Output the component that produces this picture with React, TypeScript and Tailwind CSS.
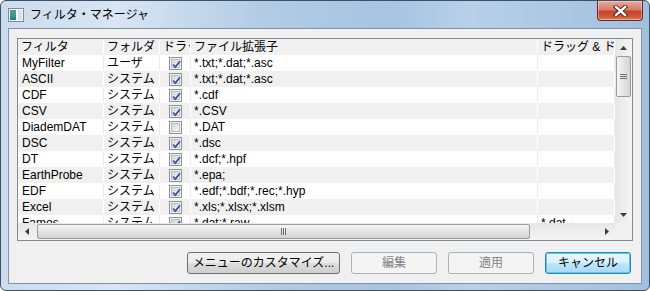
import type { ReactNode } from "react";

type Row = { name: string; folder: string; drag: boolean; ext: string; dd?: string };

const rows: Row[] = [
  { name: "MyFilter", folder: "ユーザ", drag: true, ext: "*.txt;*.dat;*.asc" },
  { name: "ASCII", folder: "システム", drag: true, ext: "*.txt;*.dat;*.asc" },
  { name: "CDF", folder: "システム", drag: true, ext: "*.cdf" },
  { name: "CSV", folder: "システム", drag: true, ext: "*.CSV" },
  { name: "DiademDAT", folder: "システム", drag: false, ext: "*.DAT" },
  { name: "DSC", folder: "システム", drag: true, ext: "*.dsc" },
  { name: "DT", folder: "システム", drag: true, ext: "*.dcf;*.hpf" },
  { name: "EarthProbe", folder: "システム", drag: true, ext: "*.epa;" },
  { name: "EDF", folder: "システム", drag: true, ext: "*.edf;*.bdf;*.rec;*.hyp" },
  { name: "Excel", folder: "システム", drag: true, ext: "*.xls;*.xlsx;*.xlsm" },
  { name: "Famos", folder: "システム", drag: true, ext: "*.dat;*.raw", dd: "*.dat" },
];

const cols = ["w-[86px]", "w-[56px]", "w-[31px]", "w-[347px]", "w-[77px]"];

function Check({ on }: { on: boolean }) {
  return (
    <span className="flex h-[13px] w-[13px] items-center justify-center border border-[#8e8f8f] bg-[#f4f4f4]">
      <span className="relative flex h-[9px] w-[9px] items-center justify-center border border-[#b9bec6] bg-[linear-gradient(135deg,#cfd3d9,#f7f7f7)]">
        {on && (
          <svg className="absolute -left-[1px] -top-[1px]" width="11" height="11" viewBox="0 0 11 11">
            <path d="M2 5.5 L4.3 8 L9 2.2" fill="none" stroke="#3a5697" strokeWidth="1.8" />
          </svg>
        )}
      </span>
    </span>
  );
}

function Cell({ w, sep, children, center = false }: { w: string; sep: string; children?: ReactNode; center?: boolean }) {
  return (
    <div
      className={`${w} flex h-full shrink-0 items-center overflow-hidden whitespace-nowrap border-r ${sep} ${
        center ? "justify-center" : "pl-[3px]"
      }`}
    >
      {children}
    </div>
  );
}

function Arrow({ dir }: { dir: "up" | "down" | "left" | "right" }) {
  const pts = {
    up: "0,4 7,4 3.5,0",
    down: "0,0 7,0 3.5,4",
    left: "4,0 4,7 0,3.5",
    right: "0,0 0,7 4,3.5",
  }[dir];
  const vert = dir === "up" || dir === "down";
  return (
    <svg width={vert ? 7 : 4} height={vert ? 4 : 7} viewBox={vert ? "0 0 7 4" : "0 0 4 7"}>
      <polygon points={pts} fill="#3c3c3c" />
    </svg>
  );
}

function VScroll() {
  return (
    <div className="flex h-full w-[17px] shrink-0 flex-col items-center bg-[linear-gradient(90deg,#e6e6e6,#f4f4f4)]">
      <div className="flex h-[17px] w-full items-center justify-center">
        <Arrow dir="up" />
      </div>
      <div className="flex h-[41px] w-[15px] items-center justify-center rounded-[2px] border border-[#9a9a9a] bg-[linear-gradient(90deg,#f4f4f4,#e4e4e4_50%,#d4d4d4)]">
        <div className="flex flex-col gap-[1px]">
          <span className="h-px w-[7px] bg-[#6e6e6e]" />
          <span className="h-px w-[7px] bg-[#6e6e6e]" />
          <span className="h-px w-[7px] bg-[#6e6e6e]" />
        </div>
      </div>
      <div className="flex-1" />
      <div className="flex h-[17px] w-full items-center justify-center">
        <Arrow dir="down" />
      </div>
    </div>
  );
}

function HScroll() {
  return (
    <div className="flex h-full w-[597px] shrink-0 items-center bg-[linear-gradient(180deg,#e6e6e6,#f4f4f4)]">
      <div className="flex h-full w-[17px] items-center justify-center">
        <Arrow dir="left" />
      </div>
      <div className="ml-[2px] flex h-[15px] w-[493px] items-center justify-center rounded-[2px] border border-[#9a9a9a] bg-[linear-gradient(180deg,#f4f4f4,#e4e4e4_50%,#d4d4d4)]">
        <div className="flex gap-[1px]">
          <span className="h-[7px] w-px bg-[#6e6e6e]" />
          <span className="h-[7px] w-px bg-[#6e6e6e]" />
          <span className="h-[7px] w-px bg-[#6e6e6e]" />
        </div>
      </div>
      <div className="flex-1" />
      <div className="flex h-full w-[17px] items-center justify-center">
        <Arrow dir="right" />
      </div>
    </div>
  );
}

function Button({ label, w, disabled = false, focused = false }: { label: string; w: string; disabled?: boolean; focused?: boolean }) {
  let cls = "border-[#707070] bg-[linear-gradient(180deg,#f2f2f2_0%,#ebebeb_50%,#dddddd_51%,#cfcfcf_100%)] text-black";
  if (disabled) cls = "border-[#adb2b5] bg-[#f4f4f4] text-[#838383]";
  if (focused)
    cls =
      "border-[#3c7fb1] bg-[linear-gradient(180deg,#eaf6fd_0%,#d9f0fc_50%,#bee6fd_51%,#a7d9f5_100%)] text-black shadow-[inset_0_0_0_1px_#48d0f7]";
  return (
    <div className={`${w} flex h-[22px] items-center justify-center rounded-[3px] border text-[12px] ${cls}`}>{label}</div>
  );
}

function TitleIcon() {
  return (
    <svg width="16" height="14" viewBox="0 0 16 14">
      <defs>
        <linearGradient id="ig" x1="0" y1="0" x2="0" y2="1">
          <stop offset="0" stopColor="#5a8fb0" />
          <stop offset="0.5" stopColor="#3f9e7d" />
          <stop offset="1" stopColor="#2f6f8f" />
        </linearGradient>
      </defs>
      <rect x="0.5" y="0.5" width="15" height="13" fill="#f4f6f8" stroke="#7d8a99" />
      <rect x="2" y="2" width="6" height="10" fill="url(#ig)" />
      <rect x="10" y="2" width="4" height="10" fill="#d8e0ea" />
    </svg>
  );
}

function CloseButton() {
  return (
    <div className="flex h-[20px] w-[46px] items-center justify-center rounded-b-[4px] border border-t-0 border-[#6a2a20] bg-[linear-gradient(180deg,#e9ab9c_0%,#d87d6a_45%,#c2432c_55%,#cf5a3a_85%,#e08a60_100%)] shadow-[inset_0_0_0_1px_rgba(255,255,255,0.35)]">
      <svg width="15" height="12" viewBox="0 0 15 12">
        <path d="M3 2 L12 10 M12 2 L3 10" stroke="#4a1a14" strokeWidth="4.2" strokeLinecap="square" />
        <path d="M3 2 L12 10 M12 2 L3 10" stroke="#ffffff" strokeWidth="2.4" strokeLinecap="square" />
      </svg>
    </div>
  );
}

export default function App() {
  return (
    <div className="flex h-[291px] w-[650px] flex-col rounded-[6px] border border-[#3f5063] bg-[linear-gradient(90deg,#cadcee_0%,#d8e5f2_18%,#b3cce6_40%,#a6c3e2_60%,#b8d0ea_72%,#a2bfde_100%)] font-['Liberation_Sans','Noto_Sans_CJK_JP',sans-serif] text-[12px] text-black">
      <div className="flex h-[27px] shrink-0">
        <div className="flex items-center gap-[6px] pl-[7px] pt-[1px]">
          <TitleIcon />
          <span className="text-[12px] text-black">フィルタ・マネージャ</span>
        </div>
        <div className="ml-auto pr-[6px]">
          <CloseButton />
        </div>
      </div>
      <div className="mx-[7px] flex h-[256px] flex-col border border-[#8194aa] bg-[#f0f0f0] pl-[8px] pr-[9px] pt-[9px]">
        <div className="flex h-[203px] w-[616px] flex-col border border-[#828790] bg-white">
          <div className="flex h-[184px]">
            <div className="flex w-[597px] flex-col overflow-hidden">
              <div className="flex h-[16px] shrink-0 bg-[#f0f0f0]">
                {["フィルタ", "フォルダ", "ドラッグ", "ファイル拡張子", "ドラッグ & ドロップ"].map((h, i) => (
                  <Cell key={h} w={cols[i]} sep="border-white">
                    {h}
                  </Cell>
                ))}
              </div>
              {rows.map((r, i) => {
                const odd = i % 2 === 1;
                const sep = odd ? "border-white" : "border-[#ececec]";
                return (
                  <div key={r.name} className={`flex h-[16px] shrink-0 ${odd ? "bg-[#f0f0f0]" : "bg-white"}`}>
                    <Cell w={cols[0]} sep={sep}>
                      <span className="pl-[1px]">{r.name}</span>
                    </Cell>
                    <Cell w={cols[1]} sep={sep}>
                      {r.folder}
                    </Cell>
                    <Cell w={cols[2]} sep={sep} center>
                      <Check on={r.drag} />
                    </Cell>
                    <Cell w={cols[3]} sep={sep}>
                      {r.ext}
                    </Cell>
                    <Cell w={cols[4]} sep={sep}>
                      {r.dd ?? ""}
                    </Cell>
                  </div>
                );
              })}
            </div>
            <VScroll />
          </div>
          <div className="flex h-[17px] shrink-0">
            <HScroll />
            <div className="h-full w-[17px] bg-[#f0f0f0]" />
          </div>
        </div>
        <div className="mt-[11px] flex justify-end gap-[11px] pr-[1px]">
          <Button label="メニューのカスタマイズ..." w="w-[153px]" />
          <Button label="編集" w="w-[86px]" disabled />
          <Button label="適用" w="w-[86px]" disabled />
          <Button label="キャンセル" w="w-[86px]" focused />
        </div>
      </div>
    </div>
  );
}
